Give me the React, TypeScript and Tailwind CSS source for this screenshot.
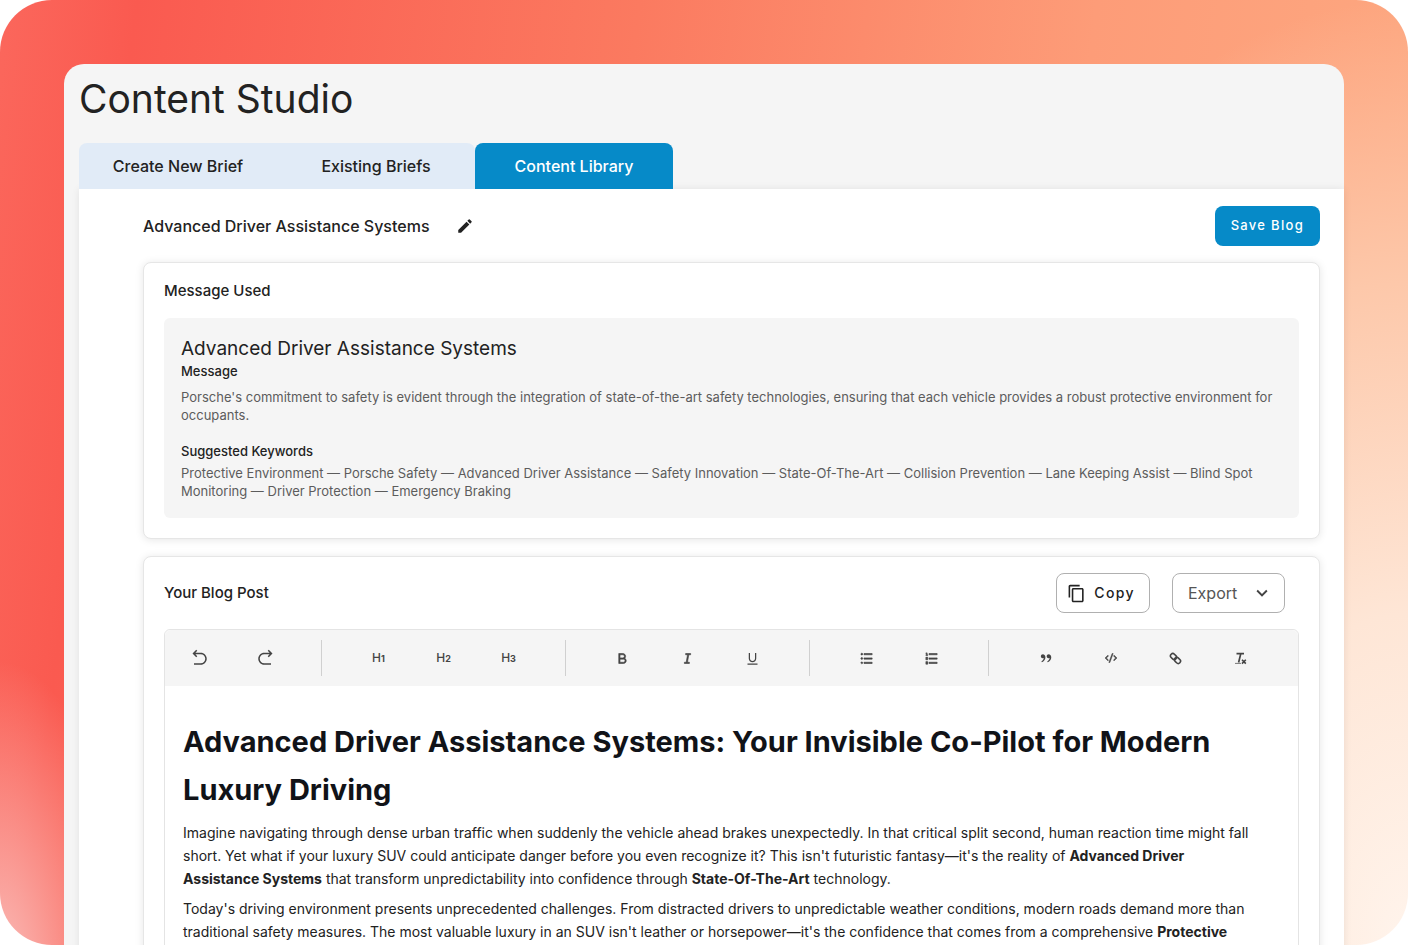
import React, { useState } from 'react';
import { MdContentCopy, MdEdit, MdKeyboardArrowDown } from 'react-icons/md';
import { RiArrowGoBackLine, RiArrowGoForwardLine, RiBold, RiItalic, RiUnderline, RiListUnordered, RiListOrdered, RiDoubleQuotesR, RiCodeSSlashLine } from 'react-icons/ri';

const tabs = ['Create New Brief', 'Existing Briefs', 'Content Library'];

const keywords = ['Protective Environment', 'Porsche Safety', 'Advanced Driver Assistance', 'Safety Innovation', 'State-Of-The-Art', 'Collision Prevention', 'Lane Keeping Assist', 'Blind Spot Monitoring', 'Driver Protection', 'Emergency Braking'];

const HeadingIcon: React.FC<{ level: number }> = ({ level }) => <span className="flex items-baseline text-xs font-medium leading-4">
    H<span className="text-[9px] font-bold">{level}</span>
  </span>;

// Slanted T on a baseline with a small cross at its foot
const ClearIcon: React.FC = () => <svg width="13" height="13" viewBox="0 0 13 13" fill="none" stroke="currentColor">
    <path d="M2.5 1.6H10M6.8 1.6L4.6 10.5" strokeWidth="1.7" />
    <path d="M1 11.4H7" strokeWidth="1" opacity="0.7" />
    <path d="M8 7.8L11.8 11.6M11.8 7.8L8 11.6" strokeWidth="1.6" />
  </svg>;

// Two interlocked loops running down to the right
const LinkIcon: React.FC = () => <svg width="13" height="13" viewBox="0 0 13 13" fill="none" stroke="currentColor" strokeWidth="1.6">
    <rect x="1.2" y="2.3" width="6.6" height="4.6" rx="2.3" transform="rotate(45 4.5 4.6)" />
    <rect x="5.2" y="6.1" width="6.6" height="4.6" rx="2.3" transform="rotate(45 8.5 8.4)" />
  </svg>;

const toolGroups = [[{
  label: 'Undo',
  icon: <RiArrowGoBackLine size={18} />
}, {
  label: 'Redo',
  icon: <RiArrowGoForwardLine size={18} />
}], [{
  label: 'Heading 1',
  icon: <HeadingIcon level={1} />
}, {
  label: 'Heading 2',
  icon: <HeadingIcon level={2} />
}, {
  label: 'Heading 3',
  icon: <HeadingIcon level={3} />
}], [{
  label: 'Bold',
  icon: <RiBold size={15} className="stroke-1" />
}, {
  label: 'Italic',
  icon: <RiItalic size={15} className="stroke-1" />
}, {
  label: 'Underline',
  icon: <RiUnderline size={15} />
}], [{
  label: 'Bullet list',
  icon: <RiListUnordered size={15} className="stroke-1" />
}, {
  label: 'Numbered list',
  icon: <RiListOrdered size={15} className="stroke-1" />
}], [{
  label: 'Quote',
  icon: <RiDoubleQuotesR size={14} />
}, {
  label: 'Code',
  icon: <RiCodeSSlashLine size={12} className="stroke-1" />
}, {
  label: 'Link',
  icon: <LinkIcon />
}, {
  label: 'Clear formatting',
  icon: <ClearIcon />
}]];

const Toolbar: React.FC = () => <div role="toolbar" aria-label="Formatting" className="flex h-14 items-center justify-between rounded-t-md bg-[#f5f5f5] px-[2px]">
    {toolGroups.map((group, i) => <React.Fragment key={i}>
        {i > 0 && <span className="h-9 w-px bg-[#d0d0d0]" />}
        <div className={i === 0 ? 'flex pr-[23px]' : 'flex px-[23px]'}>
          {group.map(tool => <button key={tool.label} type="button" aria-label={tool.label} className="flex h-8 w-[65px] items-center justify-center text-[#444]">
              {tool.icon}
            </button>)}
        </div>
      </React.Fragment>)}
  </div>;

const MessageCard: React.FC = () => <section className="rounded-lg border border-[#e6e6e6] bg-white px-5 pt-4 pb-5 shadow-[0_1px_8px_rgba(0,0,0,0.1)]">
    <h2 className="text-[15px] font-medium leading-6">Message Used</h2>
    <div className="mt-[15px] rounded-md bg-[#f5f5f5] px-[17px] py-[18px]">
      <h3 className="text-[19px] leading-[26px]">Advanced Driver Assistance Systems</h3>
      <h4 className="text-[13px] font-medium leading-[18px]">Message</h4>
      <p className="mt-2 text-[13px] leading-[18px] text-[#5c5c5c]">
        Porsche's commitment to safety is evident through the integration of state-of-the-art safety technologies, ensuring that each vehicle provides a robust protective environment for occupants.
      </p>
      <h4 className="mt-[18px] text-[13px] font-medium leading-[18px]">Suggested Keywords</h4>
      <p className="mt-1 text-[13px] leading-[18px] text-[#5c5c5c]">{keywords.join(' — ')}</p>
    </div>
  </section>;

const BlogCard: React.FC = () => <section className="mt-[17px] rounded-lg border border-[#e6e6e6] bg-white px-5 pt-4 pb-5 shadow-[0_1px_8px_rgba(0,0,0,0.1)]">
    <div className="flex items-center justify-between pr-[14px]">
      <h2 className="text-[15px] font-medium leading-6">Your Blog Post</h2>
      <div className="flex gap-[22px]">
        <button type="button" className="flex h-10 items-center gap-2 rounded-lg border border-[#b0b0b0] pr-[14px] pl-[10px] text-sm font-medium tracking-widest">
          <MdContentCopy size={19} />
          Copy
        </button>
        <div className="relative">
          <select aria-label="Export" defaultValue="Export" className="h-10 w-[113px] appearance-none rounded-lg border border-[#b0b0b0] bg-white pl-[15px] text-base text-[#555]">
            <option>Export</option>
          </select>
          <MdKeyboardArrowDown size={22} className="pointer-events-none absolute right-3 top-[9px] text-[#444]" />
        </div>
      </div>
    </div>
    <div className="mt-4 rounded-md border border-[#e4e4e4]">
      <Toolbar />
      <article className="pt-8 pr-10 pb-8 pl-[18px] text-sm leading-[23px]">
        <h1 className="text-[29px] font-bold leading-[48px] text-[#111318]">
          Advanced Driver Assistance Systems: Your Invisible Co-Pilot for Modern Luxury Driving
        </h1>
        <p className="mt-[7px]">
          Imagine navigating through dense urban traffic when suddenly the vehicle ahead brakes unexpectedly. In that critical split second, human reaction time might fall short. Yet what if your luxury SUV could anticipate danger before you even recognize it? This isn't futuristic fantasy—it's the reality of <strong>Advanced Driver Assistance Systems</strong> that transform unpredictability into confidence through <strong>State-Of-The-Art</strong> technology.
        </p>
        <p className="mt-[7px]">
          Today's driving environment presents unprecedented challenges. From distracted drivers to unpredictable weather conditions, modern roads demand more than traditional safety measures. The most valuable luxury in an SUV isn't leather or horsepower—it's the confidence that comes from a comprehensive <strong>Protective</strong>
        </p>
      </article>
    </div>
  </section>;

export default function App() {
  const [activeTab, setActiveTab] = useState('Content Library');
  return <div className="h-screen overflow-hidden rounded-[52px] bg-[radial-gradient(ellipse_40%_100%_at_100%_100%,#fff4ec_0%,#fee6d6_35%,#fdc8aa_70%,transparent_100%),radial-gradient(ellipse_9%_34%_at_0%_104%,#fac0bc_0%,transparent_100%),linear-gradient(97deg,#fb675c_0%,#fa5a50_9%,#fb7a60_42%,#fd9c78_72%,#fdaa82_100%)] px-16 pt-16 font-[Inter,sans-serif] text-[#222]">
      <main className="min-h-full rounded-t-[20px] bg-[#f5f5f5] pl-[15px]">
        <h1 className="pt-2 text-[39px] leading-[54px]">Content Studio</h1>
        <div role="tablist" className="mt-[17px] flex">
          <div className="flex rounded-t-lg bg-[#e1ebf7]">
            {tabs.slice(0, 2).map(tab => <button key={tab} type="button" role="tab" aria-selected={activeTab === tab} onClick={() => setActiveTab(tab)} className="h-[46px] w-[198px] text-base font-medium">
                {tab}
              </button>)}
          </div>
          <button type="button" role="tab" aria-selected={activeTab === tabs[2]} onClick={() => setActiveTab(tabs[2])} className="h-[46px] w-[198px] rounded-t-lg bg-[#068ac8] text-base font-medium text-white">
            {tabs[2]}
          </button>
        </div>
        <div className="bg-white pt-[17px] pr-6 pl-16 shadow-[0_0_8px_rgba(0,0,0,0.08)]">
          <div className="mb-4 flex items-center justify-between">
            <div className="flex items-center gap-[26px]">
              <h2 className="text-base font-medium">Advanced Driver Assistance Systems</h2>
              <button type="button" aria-label="Edit title">
                <MdEdit size={18} />
              </button>
            </div>
            <button type="button" className="h-10 rounded-lg bg-[#068ac8] px-4 text-[13px] font-medium tracking-widest text-white">Save Blog</button>
          </div>
          <MessageCard />
          <BlogCard />
        </div>
      </main>
    </div>;
}
